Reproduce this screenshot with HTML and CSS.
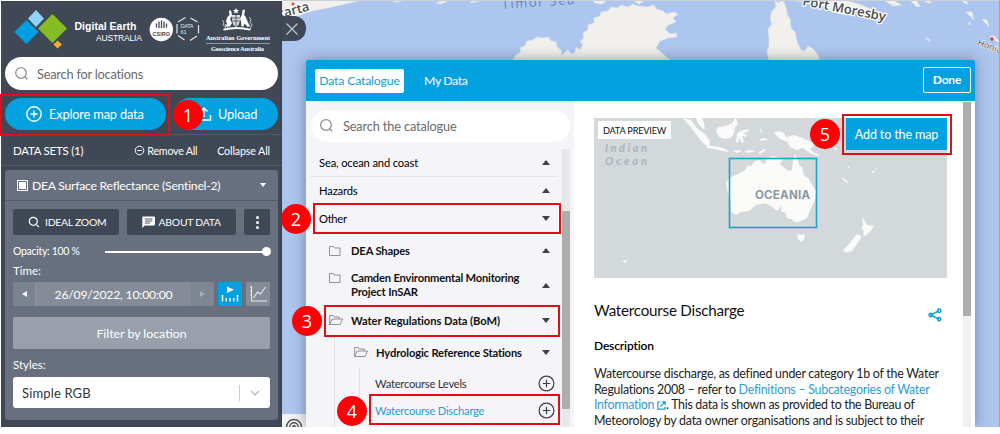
FILE: index.html
```html
<!DOCTYPE html>
<html lang="en">
<head>
<meta charset="utf-8">
<title>Digital Earth Australia Map</title>
<link rel="stylesheet" href="styles.css">
</head>
<body>
<div class="app">
  <svg class="map" width="718" height="427" viewBox="282 0 718 427">
    <rect x="282" width="718" height="427" fill="#adc6ef"/>
    <g fill="#f1f0ec" stroke="#dfe5ea" stroke-width=".7">
      <path d="M282 0H362L345 4L327 8L307 12L298 16L282 18Z"/>
      <path d="M387 0l10 2 8-2zM436 3l9-3h4l-8 4zM470 3l9-2 5-2h-9z"/>
      <path d="M512 61l4-6 5-3-1-4 5-2 2-5 6-1 4-3 6 1 5-1 3 4 5 1 1 5 4 3 1 6 6 5z"/>
      <path d="M560 61l3-7 5-4 3 4 4-1 1-6 4 3 3-5-3-4 4-3-1-5 5-3 0-5 6-2 0-5 6-2 1-4 7-1 3-4 7 1 3-3 7 2 5-3 4 2 11 1 6-2 2 4 7 2 3 3 8-2 4 2-5 4 3 4-8 3-3 4 5 5 6-1 1 4-9 1-8 3-4 7 7 6 8 7z"/>
      <path d="M769 61l-2-9 2-6 0-8-1-9 4-5-2-6 2-7 4-4-1-6 4 2 3-3 3 4 3 12 2 3 1 9 4 4 2 10 4 8 4 1 3-5 5 3 5 6 2 6z"/>
      <path d="M592 0h15l-5 4-7-1zM633 0h12l-6 4zM783 0h60l16 4 14 6 12 8-13-1-14-8-13 6-16-5-14-8-20-1z"/>
      <path d="M884 0l9 6 8-1-8-5zM910 0l7 7 3-1-4-6zM922 0l7 3 3-1-6-2zM961 0l5 4 2-1-3-3zM966 12l8 8-2-8zM982 19l7 8-2-7zM968 22l2 3 1-1zM990 36l6 5 4 1-6-6zM925 38l5 4-1-3z"/>
    </g>
    <circle cx="293" cy="4" r="1.4" fill="#e23b3b"/><circle cx="992" cy="39" r="1.7" fill="#e23b3b"/>
    <g class="place">
      <text x="278" y="19" transform="rotate(-15 278 19)">karta</text>
      <text x="802" y="5" font-size="14" transform="rotate(11 802 5)">Port Moresby</text>
      <text class="honia" x="977" y="45" transform="rotate(20 977 45)">Honia</text>
      <text class="sea" x="502" y="9" transform="rotate(-4 502 9)">Timor Sea</text>
    </g>
    <path d="M282 .5H1000" stroke="#ccd1d8"/><path d="M999.5 0V427" stroke="#9ba5bd"/>
  </svg>

  <aside class="side">
    <header class="brand">
      <svg width="281" height="56" viewBox="1 1 281 56">
        <path d="M26.5 20L38.500 32 26.500 44 14.500 32Z" fill="#009fe3"/>
        <path d="M36 10L44 18.500 36 27 28 18.500Z" fill="#8fd3f6"/>
        <path d="M52.500 14L67 28.500 52.500 43 38 28.500Z" fill="#86bc25"/>
        <path d="M57.500 40.500L62 44.500 57.500 48.500 53.500 44.500Z" fill="#f6a938"/>
        <g fill="#fff">
          <text class="logo1" x="74.500" y="30" textLength="62">Digital Earth</text>
          <text class="logo2" x="96" y="40.500" textLength="46">AUSTRALIA</text>
          <circle cx="161.300" cy="29.500" r="11.700"/>
        </g>
        <path d="M156.500 23.500v4M159 21.500v6.500M161.500 20.500v7.500M164 21.500v6.500M166.500 23.500v4" stroke="#3f4854" stroke-width="1.300"/>
        <text x="152.500" y="35.500" class="csiro" textLength="17.500">CSIRO</text>
        <path d="M178 22l7.500-4.500M190.500 18l7 4M177 24v9.500M198.500 25v8.500M178 35.500l6.500 4.500M190 40.500l7-4.500" stroke="#e3e6ea" stroke-width="1.200" fill="none"/>
        <g class="data61"><text x="180.500" y="28" textLength="13">DATA</text><text x="180.500" y="34" font-weight="bold">61</text></g>
        <g fill="#fff">
          <path d="M236 8l1 2 2 0-1.500 1.500.5 2-2-1-2 1 .5-2L233 10l2 0z"/>
          <path d="M232 15h8v6l-1.500 4-2.500 2-2.500-2-1.500-4z" opacity=".8"/>
          <path d="M229 11l1.500-1 1 2 .5 4-2 3 2 4-2 3.500h-5l2-2.500-1-3 1.500-4 2-2z"/>
          <path d="M242.500 10l2-.5.5 2-1 3 2 3 2 5 2 4-2.500 0-3-3-1 3h-2l-.5-5-1-3 2-4z"/>
          <path d="M223 29q13-4 28 0l-1 1.500q-13-3-26 0z"/>
          <path d="M222 20l2 2-1 3 3 2-2 2M249 17l2 2-1 3 2 3-2 4M225 24l3 4M247 27l3-2" fill="none" stroke="#dfe2e6" stroke-width=".8"/>
        </g>
        <path d="M232 18h8M232 21h8M236 15v11" stroke="#3f4854" stroke-width=".8"/>
        <g class="gov"><text x="206" y="40" textLength="64">Australian Government</text><text x="211" y="50.500" textLength="53">Geoscience Australia</text></g>
        <path d="M206 43.500h64" stroke="#b9bec6" stroke-width=".7"/>
      </svg>
    </header>
    <div class="search">
      <svg width="16" height="16" viewBox="0 0 16 16"><circle cx="7" cy="7" r="5.300"/><path d="M10.800 10.800l2.500 2.500"/></svg>
      <span class="t-loc">Search for locations</span>
    </div>
    <div class="actions">
      <div class="btn explore"><svg width="16" height="16" viewBox="0 0 16 16"><circle cx="8" cy="8" r="7.200"/><path d="M8 4.500v7M4.500 8h7"/></svg><span class="t-exp">Explore map data</span></div>
      <div class="btn upload"><svg width="16" height="16" viewBox="0 0 16 16"><path d="M1.500 9v5h13V9M8 11V2M4.500 5.500L8 2l3.500 3.500"/></svg><span class="t-upl">Upload</span></div>
    </div>
    <div class="sets">
      <span class="t-sets">DATA SETS (1)</span>
      <span class="remove"><svg width="11" height="11" viewBox="0 0 11 11"><circle cx="5.500" cy="5.500" r="4.300"/><path d="M3.200 5.500h4.600"/></svg><span class="t-rem">Remove All</span></span>
      <span class="t-col">Collapse All</span>
    </div>
    <section class="card">
      <div class="card-head"><i class="check"></i><span class="t-dea">DEA Surface Reflectance (Sentinel-2)</span><i class="caret down white"></i></div>
      <div class="card-body">
        <div class="tools">
          <div class="tool zoom"><svg width="12" height="12" viewBox="0 0 12 12"><circle cx="5.300" cy="5.300" r="4"/><path d="M8.500 8.700l2.300 2.300"/></svg><span class="t-zoom">IDEAL ZOOM</span></div>
          <div class="tool about"><svg width="13" height="12" viewBox="0 0 13 12"><path class="fill" d="M1 .5h11q1 0 1 1v7q0 1-1 1H3L.3 12V1.200q0-.7.7-.7z"/><path class="dark" d="M2.800 3h7.600M2.800 5h7.600M2.800 7h5.400"/></svg><span class="t-about">ABOUT DATA</span></div>
          <div class="tool more"><i></i><i></i><i></i></div>
        </div>
        <div class="opacity"><span class="t-opa">Opacity: 100 %</span><div class="slider"></div></div>
        <div class="label t-time">Time:</div>
        <div class="time">
          <div class="date"><span class="step"><i class="tri prev"></i></span><span class="value"><span class="t-date">26/09/2022, 10:00:00</span></span><span class="step next"><i class="tri fwd"></i></span></div>
          <svg class="sq blue" width="24" height="24" viewBox="0 0 24 24"><path fill="#fff" d="M9 4.500l7 3.300L9 11z"/><path d="M4.500 13v6.500M8.300 16v3.500M12 16v3.500M15.700 16v3.500M19.500 13v6.500" stroke="#fff" stroke-width="1.500"/></svg>
          <svg class="sq" width="24" height="24" viewBox="0 0 24 24"><path d="M5.500 4v15H21M4 5h2M4 9h2M4 13h2M7.500 16l4-6 3 2 5-7" stroke="#e8eaee" fill="none" stroke-width="1.100"/></svg>
        </div>
        <div class="filter"><span class="t-fil">Filter by location</span></div>
        <div class="label t-sty">Styles:</div>
        <div class="select"><span class="t-rgb">Simple RGB</span><span class="arrow"><svg width="10" height="6" viewBox="0 0 10 6"><path d="M1 1l4 4 4-4"/></svg></span></div>
      </div>
    </section>
  </aside>

  <div class="collapse"><svg width="12" height="12" viewBox="0 0 12 12"><path d="M.5.500l11 11M11.500.500l-11 11"/></svg></div>
  <div class="compass"><svg width="24" height="13" viewBox="0 0 24 13"><g fill="none" stroke="#555" stroke-width="1.500"><circle cx="12" cy="13" r="7.500"/><circle cx="12" cy="13" r="4.300"/></g><circle cx="12" cy="13" r="2" fill="#555"/></svg></div>

  <main class="panel">
    <header class="tabs"><span class="tab"><span class="t-cat">Data Catalogue</span></span><span class="t-my">My Data</span><span class="done"><span class="t-done">Done</span></span></header>
    <div class="cols">
      <div class="left">
        <div class="search cat"><svg width="16" height="16" viewBox="0 0 16 16"><circle cx="7" cy="7" r="5.300"/><path d="M10.800 10.800l2.500 2.500"/></svg><span class="t-sc">Search the catalogue</span></div>
        <div class="tree-wrap">
          <div class="tree">
            <div class="row top first"><span class="t-sea">Sea, ocean and coast</span><i class="caret up"></i></div>
            <div class="row top"><span class="t-haz">Hazards</span><i class="caret up"></i></div>
            <div class="row top"><span class="t-oth">Other</span><i class="caret down"></i></div>
            <div class="row folder dea"><svg width="14" height="12" viewBox="0 0 14 12"><path d="M1.500 1.500h4l1 1.500h5.500v7.500h-10.500z"/></svg><span class="t-shp">DEA Shapes</span><i class="caret up"></i></div>
            <div class="row folder cam"><svg width="14" height="12" viewBox="0 0 14 12"><path d="M1.500 1.500h4l1 1.500h5.500v7.500h-10.500z"/></svg><span><span class="t-cam">Camden Environmental Monitoring</span><br><span class="t-ins">Project InSAR</span></span><i class="caret up"></i></div>
            <div class="row folder wat"><svg width="14" height="12" viewBox="0 0 14 12"><path d="M.7 10.500V1.500h3.500l1 1.500h5v2M.7 10.500L3.200 5h10.300l-2.500 5.500z"/></svg><span class="t-wat">Water Regulations Data (BoM)</span><i class="caret down"></i></div>
            <div class="branch">
              <div class="row folder hyd"><svg width="14" height="12" viewBox="0 0 14 12"><path d="M.7 10.500V1.500h3.500l1 1.500h5v2M.7 10.500L3.200 5h10.300l-2.500 5.500z"/></svg><span class="t-hyd">Hydrologic Reference Stations</span><i class="caret down"></i></div>
              <div class="leaves">
                <div class="row leaf"><span class="t-lev">Watercourse Levels</span><svg width="17" height="17" viewBox="0 0 17 17"><circle cx="8.500" cy="8.500" r="7.400"/><path d="M8.500 4.800v7.400M4.800 8.500h7.400"/></svg></div>
                <div class="row leaf on"><span class="t-dis">Watercourse Discharge</span><svg width="17" height="17" viewBox="0 0 17 17"><circle cx="8.500" cy="8.500" r="7.400"/><path d="M8.500 4.800v7.400M4.800 8.500h7.400"/></svg></div>
              </div>
            </div>
          </div>
          <div class="bar"><div class="thumb t1"></div></div>
        </div>
      </div>
      <div class="right">
        <div class="detail">
          <div class="preview">
            <svg width="353" height="160" viewBox="594 118 353 160">
              <rect x="594" y="118" width="353" height="160" fill="#d3d8db"/>
              <g fill="#fafaf8">
                <path d="M683 118l8 2 6 8 9 7 4 6-1 5-4-1-7-8-5-7-5-6zM696 118h6l2 5 1 6-2 0-5-6z"/>
                <path d="M735 118l-2 4-7 4-9 1-1 4 3 6 6 2 6-1 3-5 1-6 3-3-2-6z"/>
                <path d="M707 145l6 1 6 1 7 2 3 3-7-1-8-2-7-1zM732 151l6-1 4 1-5 2zM744 151l8-1 4 1-8 2zM758 153l6-4 2 1-6 4z"/>
                <path d="M740 131l8-2 1 2-6 2 4 2-1 2-4-1 2 6-2 1-3-5-1 5-2-1 1-8zM760 127l2 4-1 3zM759 139l6-1 3 2-7 1z"/>
                <path d="M774 133l5-2 5 2 2 4 8-2 9 3 8 4 3 4-4 3 3 3 7 3-3 1-9-4-5-4-6 2-7-3-3-5-7-3z"/>
                <path d="M726 182l5-5 9-4 5-3 3-5 3 1 4-5 5-1 3 4 3-1 0-4 6-3 9 2 2 1-3 5 8 7 4-1 1-10 2-6 3 6 1 5 3 2 2 8 5 4 3 6 4 6-1 9-4 8-4 10-8 4-4 0-4-3-4-1-2-6-4 0 1-6-5 5-6-5-6-3-9 2-7 6-8 1-5 3-5-3-1-14-3-9z"/>
                <path d="M797 234l4 1 4-1-1 6-3 2-3-3zM862 217l3 4 2 4 7 1-3 5-6 5-2-2 1-3-3-3 2-2zM857 234l5 2-5 8-5 7-6 2-3-3 6-6z"/>
                <path d="M842 177l6 5 1 2-6-4zM847 165l3 5-1-4M871 172l4-2-1 3zM875 169l3-1-2 2M832 145l4 6 1-2-4-5M810 145l7-1 2-4-6 2zM622 261l5-1-1 3z"/>
              </g>
              <path d="M788 134v13M716 128l17-5" stroke="#f0dada" stroke-width=".6"/>
              <g class="ocean"><text x="605" y="152" textLength="42">Indian</text><text x="605" y="165" textLength="42">Ocean</text></g>
              <text class="oceania" x="755" y="199" textLength="55">OCEANIA</text>
              <rect x="729.500" y="158.500" width="87" height="69" fill="none" stroke="#16a5cb" stroke-width="1.600"/>
            </svg>
            <span class="tag"><span class="t-pre">DATA PREVIEW</span></span>
            <span class="add"><span class="t-add">Add to the map</span></span>
          </div>
          <div class="title"><span class="t-title">Watercourse Discharge</span><svg width="14" height="14" viewBox="0 0 14 14"><path d="M11 2.700L3 7l8 4.300"/><circle cx="2.700" cy="7" r="1.700"/><circle cx="11.200" cy="2.700" r="1.700"/><circle cx="11.200" cy="11.300" r="1.700"/></svg></div>
          <div class="desc"><span class="t-desc">Description</span></div>
          <div class="para">
            <div class="t-p1">Watercourse discharge, as defined under category 1b of the Water</div>
            <div class="t-p2">Regulations 2008 – refer to <a>Definitions – Subcategories of Water</a></div>
            <div class="t-p3"><a>Information <svg width="9" height="9" viewBox="0 0 9 9"><path d="M3.500 1H.8v7.200H8V5.500M3.300 5.700L8 1M5 .8h3.200V4"/></svg></a>. This data is shown as provided to the Bureau of</div>
            <div class="t-p4">Meteorology by data owner organisations and is subject to their</div>
          </div>
        </div>
        <div class="bar r"><div class="thumb t2"></div></div>
      </div>
    </div>
  </main>

  <div class="mark m1"></div><div class="mark m2"></div><div class="mark m3"></div><div class="mark m4"></div><div class="mark m5"></div>
  <b class="num n1">1</b><b class="num n2">2</b><b class="num n3">3</b><b class="num n4">4</b><b class="num n5">5</b>
</div>
</body>
</html>
```
FILE: styles.css
```css
* { box-sizing: border-box; }
body { margin: 0; background: #fff; font-family: Lato, "Noto Sans", sans-serif; font-size: 13px; overflow: hidden; }
svg { display: block; flex: none; }
span { white-space: nowrap; }
.app { position: relative; width: 1000px; height: 427px; overflow: hidden; display: flex; padding: 1px 0 0 1px; }
.map { position: absolute; left: 282px; top: 0; }
.place text { font-family: "Open Sans", sans-serif; font-size: 13px; fill: #4b4b4b; stroke: #fff; stroke-width: 2.5px; paint-order: stroke; font-weight: 600; }
.place .honia { font-size: 9px; font-weight: 400; stroke-width: 1px; }
.place .sea { fill: #6484b5; stroke: none; letter-spacing: 1.5px; font-weight: 400; }

.side { width: 281px; background: #3f4854; color: #fff; position: relative; display: flex; flex-direction: column; box-shadow: inset -1px 0 #37404b; }
.brand { height: 56px; }
.logo1 { font: bold 10.5px "Liberation Sans", sans-serif; }
.logo2 { font: 8.5px "Liberation Sans", sans-serif; }
.csiro { font: bold 5.5px "Liberation Sans", sans-serif; fill: #3f4854; }
.data61 text { font: 5.5px "Liberation Sans", sans-serif; fill: #e3e6ea; }
.gov text { font: bold 6.3px "Liberation Serif", serif; fill: #fff; }
.search { height: 33px; margin: 0 4px; border-radius: 17px; background: #fff; color: #6b6b6b; display: flex; align-items: center; padding-left: 9px; gap: 7px; }
.search svg { fill: none; stroke: #8f8f94; stroke-width: 1.3; }
.t-loc { font-size: 12.8px; letter-spacing: -.22px; }
.t-sc { font-size: 12.8px; letter-spacing: -.16px; }
.actions { display: flex; gap: 8px; padding: 8px 4px 4px; border-bottom: 1px solid #505965; }
.btn { height: 32px; border-radius: 16px; background: #03a1e0; display: flex; align-items: center; font-size: 12.8px; letter-spacing: -.17px; }
.btn svg { fill: none; stroke: #fff; stroke-width: 1.4; }
.explore { width: 161px; padding-left: 21px; gap: 7px; }
.upload { width: 104px; padding-left: 22px; gap: 6px; }
.sets { height: 31px; border-bottom: 1px solid #505965; display: flex; align-items: center; padding: 0 12px; }
.t-sets { font-size: 11.5px; letter-spacing: -.25px; }
.remove { display: flex; align-items: center; gap: 2px; margin-left: auto; margin-right: 20px; }
.remove svg { fill: none; stroke: #fff; }
.t-rem { font-size: 10.7px; letter-spacing: -.25px; }
.t-col { font-size: 10.7px; letter-spacing: -.13px; }
.card { margin: 4px 4px 0; height: 250px; border-radius: 3px; background: #687080; }
.card-head { height: 31px; border-bottom: 1px solid #535c69; display: flex; align-items: center; padding: 0 12px; gap: 4px; }
.t-dea { font-size: 12.2px; letter-spacing: -.25px; }
.check { width: 11px; height: 11px; background: #fff; border: 1px solid #fff; box-shadow: inset 0 0 0 1px #687080; }
.caret { width: 0; height: 0; border: 4px solid transparent; margin-left: auto; flex: none; }
.caret.down { border-top: 5px solid #3a424e; border-bottom: 0; }
.caret.up { border-bottom: 5px solid #3a424e; border-top: 0; }
.caret.white { border-top-color: #fff; border-left-width: 3.5px; border-right-width: 3.5px; border-top-width: 4px; }
.card-body { padding: 8px 8px 0; }
.tools { display: flex; gap: 8px; }
.tool { height: 26px; border-radius: 2px; background: #3f4854; display: flex; align-items: center; font-size: 10.4px; letter-spacing: -.25px; }
.tool svg { fill: none; stroke: #fff; stroke-width: 1.2; }
.tool .fill { fill: #fff; stroke: none; }
.tool .dark { stroke: #3f4854; stroke-width: .9; }
.zoom { width: 106px; padding-left: 15px; gap: 5px; }
.about { width: 110px; padding-left: 15px; gap: 4px; }
.more { width: 26px; flex-direction: column; justify-content: center; gap: 2px; }
.more i { width: 3px; height: 3px; border-radius: 50%; background: #fff; }
.opacity { height: 31px; display: flex; align-items: center; justify-content: space-between; font-size: 10.5px; letter-spacing: -.3px; }
.slider { width: 165px; height: 2px; background: #fff; position: relative; top: 1px; }
.slider::after { content: ""; position: absolute; right: -1px; top: -4px; width: 9px; height: 9px; border-radius: 50%; background: #fff; }
.label { font-size: 11.5px; height: 16px; line-height: 10px; }
.time { display: flex; gap: 4px; height: 24px; }
.date { width: 201px; background: #858c98; display: flex; border-radius: 2px; overflow: hidden; }
.step { width: 23px; display: flex; align-items: center; justify-content: center; border-right: 1px solid #8f95a1; background: #7c8390; }
.step.next { border: 0; background: #7f8693; }
.value { flex: 1; display: flex; justify-content: center; align-items: center; font-size: 12.2px; letter-spacing: -.2px; }
.tri { width: 0; height: 0; border: 3px solid transparent; }
.tri.prev { border-right: 5px solid #fff; border-left: 0; }
.tri.fwd { border-left: 5px solid #a6abb5; border-right: 0; }
.sq { background: #858c98; border-radius: 1px; }
.sq.blue { background: #03a1e0; }
.filter { height: 32px; margin: 11px 0; background: #9aa0ab; border-radius: 2px; display: flex; align-items: center; justify-content: center; font-size: 12.3px; }
.t-sty { height: 17px; }
.select { height: 31px; background: #fff; border-radius: 3px; color: #333; display: flex; align-items: center; padding: 0 10px 0 9px; font-size: 13px; letter-spacing: .15px; }
.arrow { margin-left: auto; height: 16px; border-left: 1px solid #ccc; padding-left: 10px; display: flex; align-items: center; }
.arrow svg { fill: none; stroke: #bbb; stroke-width: 1.5; }

.collapse { position: absolute; left: 282px; top: 16px; width: 24px; height: 25px; border-radius: 0 12px 12px 0; background: #3f4854; display: flex; align-items: center; padding-left: 4px; }
.collapse svg { stroke: #c2c5ca; stroke-width: 1.2; }
.compass { position: absolute; left: 282px; top: 414px; width: 24px; height: 13px; background: #f3f3f5; }

.panel { position: relative; margin: 59px 0 0 24px; width: 669px; height: 367px; border-radius: 2px 2px 0 0; box-shadow: 0 0 14px rgba(50, 60, 90, .5); overflow: clip; overflow-clip-margin: 16px; display: flex; flex-direction: column; }
.tabs { height: 41px; flex: none; background: #03a1e0; border-radius: 2px 2px 0 0; display: flex; align-items: center; color: #fff; padding: 0 4px 0 9px; font-size: 12.3px; letter-spacing: -.2px; }
.tab { width: 89px; height: 24px; border-radius: 2px; background: #fff; color: #1f9ad0; display: flex; align-items: center; justify-content: center; margin-right: 20px; }
.t-my { letter-spacing: -.4px; }
.done { margin: -2px 0 0 auto; width: 48px; height: 26px; border: 1px solid #fff; border-radius: 2px; font-weight: bold; font-size: 12px; display: flex; align-items: center; justify-content: center; }
.cols { flex: 1; min-height: 0; display: flex; }
.left { width: 268px; background: #f5f5f9; padding-top: 9px; }
.search.cat { margin: 0 4px 0 5px; height: 32px; padding-left: 8px; gap: 8px; }
.tree-wrap { display: flex; margin-top: 7px; padding-left: 4px; height: 278px; }
.tree { width: 252px; color: #111; font-size: 11.2px; overflow: hidden; letter-spacing: -.15px; }
.row { display: flex; align-items: center; padding-right: 12px; }
.row.top { height: 28px; padding-left: 9px; width: 252px; color: #000; }
.row.first { height: 27.5px; border-bottom: 1px solid #e6e6ea; width: 248px; padding-right: 8px; }
.t-oth { letter-spacing: -.3px; }
.folder { font-weight: bold; color: #111; }
.folder > svg { fill: none; stroke: #85858c; stroke-width: .9; margin-right: 9px; }
.dea { height: 36px; padding-left: 18px; }
.cam { height: 33px; padding: 0 12px 0 18px; line-height: 14px; }
.cam svg { margin-top: -14px; }
.t-cam { letter-spacing: -.2px; }
.wat { height: 35px; padding-left: 18px; margin-top: 1px; letter-spacing: -.07px; }
.wat > svg, .hyd > svg { margin-right: 8px; margin-left: 1px; }
.branch { margin-left: 24px; border-left: 1px solid #e0e0e6; height: 110px; }
.hyd { height: 31px; padding-left: 18px; margin-top: -1px; }
.leaves { margin-left: 24px; border-left: 1px solid #e0e0e6; height: 80px; padding-top: 2px; }
.leaf { height: 27.5px; padding-left: 15px; padding-right: 7px; color: #333; letter-spacing: -.24px; }
.leaf svg { margin-left: auto; fill: none; stroke: #3a3f47; stroke-width: 1.2; }
.leaf.on { color: #2f9bd0; }
.bar { width: 8px; background: #e8e8ea; }
.thumb { background: #adadad; }
.t1 { margin-top: 62px; height: 198px; }
.right { width: 401px; background: #fff; display: flex; padding: 1px 4px 0 20px; justify-content: space-between; }
.bar.r { background: #f1f1f1; }
.t2 { height: 214px; }
.detail { width: 353px; padding-top: 16px; color: #111; }
.preview { position: relative; height: 160px; }
.ocean text { font: italic bold 11px Lato, sans-serif; fill: #a9b4bc; }
.oceania { font: bold 11.5px Inter, sans-serif; fill: #8b98a4; }
.tag { position: absolute; left: 4px; top: 3px; width: 73px; height: 18px; background: #fff; display: flex; align-items: center; justify-content: center; font-size: 9.2px; letter-spacing: -.2px; }
.add { position: absolute; right: 0; top: 0; width: 101px; height: 32px; background: #03a1e0; color: #fff; display: flex; align-items: center; justify-content: center; font-size: 12.6px; letter-spacing: -.16px; }
.title { display: flex; justify-content: space-between; align-items: center; margin-top: 21px; height: 22px; padding-right: 5px; }
.t-title { font-size: 15.2px; letter-spacing: -.23px; }
.title svg { fill: none; stroke: #1a9fd4; stroke-width: 1.5; margin-top: 10px; }
.desc { margin-top: 15px; height: 20px; line-height: 20px; font-size: 12px; letter-spacing: -.15px; font-weight: 600; color: #000; }
.para { margin-top: 10px; font-size: 12.4px; line-height: 15.6px; color: #222; white-space: nowrap; }
.para a { color: #2f9bd0; }
.para svg { display: inline; fill: none; stroke: #1a9fd4; stroke-width: 1.2; vertical-align: -1px; }
.t-p1 { letter-spacing: -.24px; }
.t-p2 { letter-spacing: -.26px; }
.t-p3 { letter-spacing: -.3px; }
.t-p4 { letter-spacing: -.24px; }

.mark { position: absolute; border: 2px solid #dc1016; }
.m1 { left: 0; top: 94px; width: 170px; height: 42px; }
.m2 { left: 313px; top: 203px; width: 248px; height: 31px; }
.m3 { left: 324px; top: 305px; width: 236px; height: 32px; }
.m4 { left: 369px; top: 394px; width: 191px; height: 31px; }
.m5 { left: 842px; top: 114px; width: 110px; height: 41px; }
.num { position: absolute; width: 30px; height: 30px; border-radius: 50%; background: #fb0207; color: #fff; font: 18px/30px "Open Sans", sans-serif; text-align: center; }
.n1 { left: 173px; top: 100px; }
.n2 { left: 281px; top: 204px; }
.n3 { left: 292px; top: 306px; }
.n4 { left: 337px; top: 396px; }
.n5 { left: 810px; top: 119px; }
```
